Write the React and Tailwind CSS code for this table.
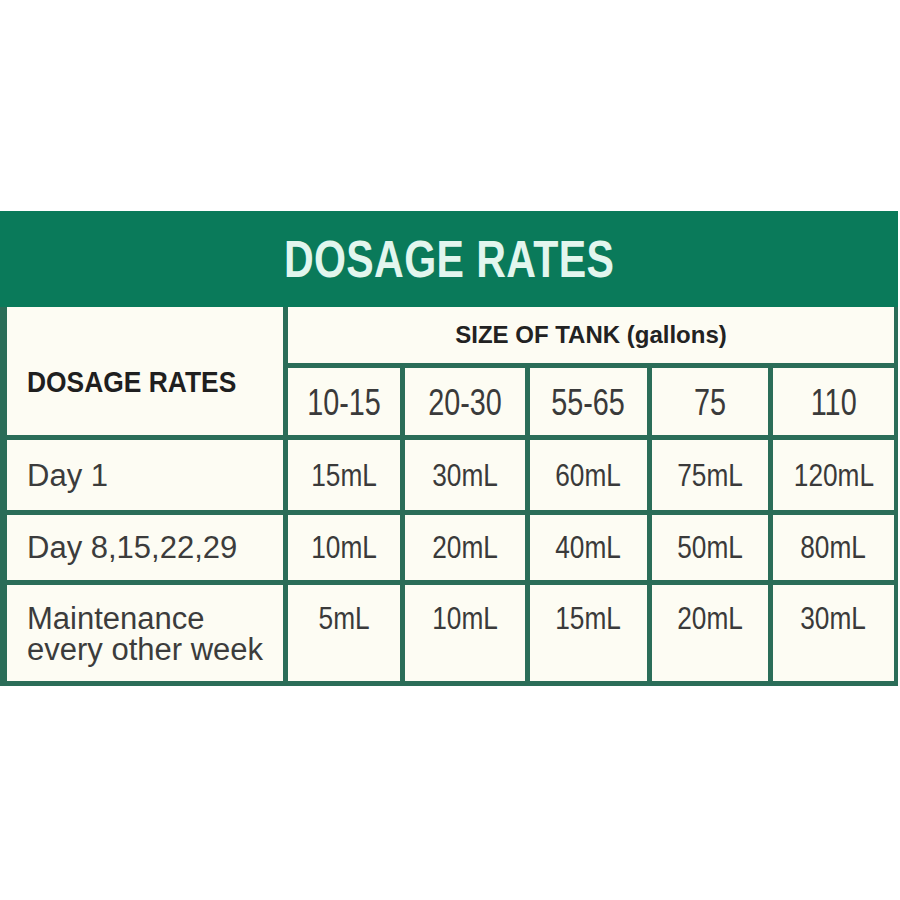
const sizes = ["10-15", "20-30", "55-65", "75", "110"];

const rows = [
  { label: ["Day 1"], values: ["15mL", "30mL", "60mL", "75mL", "120mL"] },
  { label: ["Day 8,15,22,29"], values: ["10mL", "20mL", "40mL", "50mL", "80mL"] },
  { label: ["Maintenance", "every other week"], values: ["5mL", "10mL", "15mL", "20mL", "30mL"], top: true },
];

export default function App() {
  return (
    <div className="min-h-[900px] w-[900px] bg-white font-['Liberation_Sans',Arial,sans-serif]">
      <div className="pt-[211px] w-[898px]">
        {/* Title band */}
        <div className="h-[96px] bg-[#0a7a5a] flex items-center justify-center">
          <span className="inline-block scale-x-[0.79] text-[52px] font-bold leading-none text-[#e2f6ee] tracking-[0.5px]">
            DOSAGE RATES
          </span>
        </div>

        {/* Table grid: gaps show the line colour */}
        <div className="grid grid-cols-[276px_112px_120px_117px_116px_121px] grid-rows-[56px_67px_70px_65px_96px] gap-[5px] bg-[#2b6d58] pl-[7px] pr-[4px] pb-[5px]">
          <div className="row-span-2 bg-[#fdfcf3] flex items-center pl-[20px] pt-[22px]">
            <span className="inline-block origin-left scale-x-[0.88] text-[30px] font-bold text-[#1f1f1f] leading-none">
              DOSAGE RATES
            </span>
          </div>
          <div className="col-span-5 bg-[#fdfcf3] flex items-center justify-center">
            <span className="text-[24px] font-bold text-[#222] leading-none">SIZE OF TANK (gallons)</span>
          </div>

          {sizes.map((s) => (
            <div key={s} className="bg-[#fdfcf3] flex items-center justify-center pt-[2px]">
              <span className="inline-block scale-x-[0.8] text-[36px] text-[#3a3a3a] leading-none">{s}</span>
            </div>
          ))}

          {rows.map((r) => (
            <div key={r.label[0]} className="contents">
              <div className={`bg-[#fdfcf3] flex flex-col pl-[20px] ${r.top ? "justify-start pt-[18px]" : "justify-center"}`}>
                {r.label.map((l) => (
                  <div key={l} className="text-[31px] text-[#3c3c3c] leading-[31px]">{l}</div>
                ))}
              </div>
              {r.values.map((v, i) => (
                <div
                  key={i}
                  className={`bg-[#fdfcf3] flex justify-center ${r.top ? "items-start pt-[18px]" : "items-center"}`}
                >
                  <span className="inline-block scale-x-[0.82] text-[32px] text-[#3a3a3a] leading-[31px]">{v}</span>
                </div>
              ))}
            </div>
          ))}
        </div>
      </div>
    </div>
  );
}
